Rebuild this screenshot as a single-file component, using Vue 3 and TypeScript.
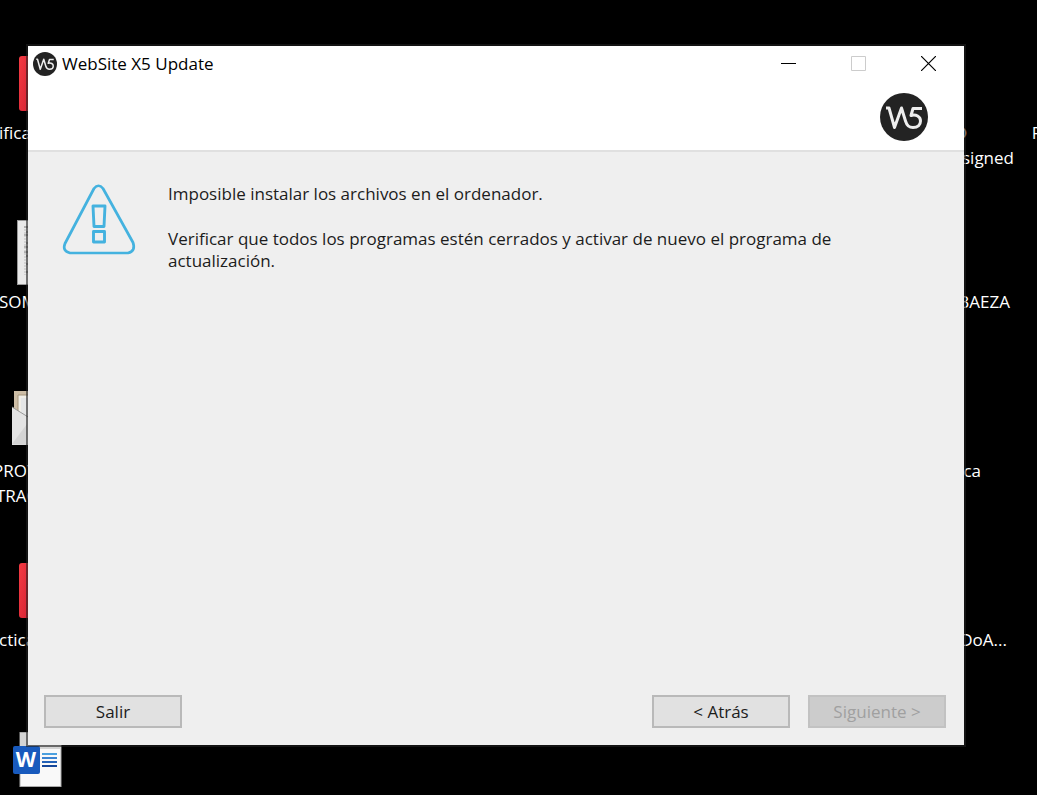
<script setup lang="ts">
interface DesktopLabel {
  text: string
  side: 'left' | 'right'
  offset: number
  top: number
}

const labels: DesktopLabel[] = [
  { text: 'ifica', side: 'left', offset: -1, top: 120 },
  { text: 'SOM', side: 'left', offset: -1, top: 289 },
  { text: 'PROY', side: 'left', offset: -7, top: 458 },
  { text: 'TRAC', side: 'left', offset: -4, top: 483 },
  { text: 'ctica', side: 'left', offset: -1, top: 627 },
  { text: 'D', side: 'right', offset: 70, top: 120 },
  { text: 'signed', side: 'right', offset: 23, top: 145 },
  { text: 'P', side: 'right', offset: -5, top: 120 },
  { text: 'BAEZA', side: 'right', offset: 27, top: 289 },
  { text: 'ca', side: 'right', offset: 56, top: 458 },
  { text: 'DoA...', side: 'right', offset: 30, top: 627 },
]

const placement = (l: DesktopLabel) => ({ top: `${l.top}px`, [l.side]: `${l.offset}px` })
</script>

<template>
  <div class="desktop">
    <div class="file pdf first"></div>
    <svg class="file sheet" width="26" height="66" viewBox="0 0 26 66" aria-hidden="true">
      <rect x=".5" y=".5" width="25" height="64" fill="#e9e9e9" stroke="#999" />
      <path d="M7 7h6M9 12h4M7 15h5M9 23h4M7 27h5M7 32h5M9 36h4M9 44h3M9 52h3" stroke="#777" />
      <path d="M8 9v46" stroke="#bbb" stroke-dasharray="2 1" />
    </svg>
    <svg class="file envelope" width="30" height="56" viewBox="0 0 30 56" aria-hidden="true">
      <path d="M3 1h27v54H3z" fill="#cdbda5" />
      <path d="M7 5h23v45H7z" fill="#f1eee7" stroke="#a6957c" />
      <path d="M10 8h20v40H10z" fill="#e5e6e6" />
      <path d="M1 17l29 18v20H1z" fill="#e4e4e4" />
      <path d="M1 17l29 18" stroke="#999" fill="none" />
      <path d="M1 54l15-20v21z" fill="#d4d4d4" />
    </svg>
    <div class="file pdf second"></div>
    <svg class="file word" width="50" height="56" viewBox="0 0 50 56" aria-hidden="true">
      <rect x="7" y=".5" width="41" height="54" fill="#f9f9f9" stroke="#aaa" />
      <path d="M7 1h40v16H7z" fill="#d4d4d4" />
      <path d="M29 22h15" stroke="#4ba0df" stroke-width="2" />
      <path d="M29 26h15" stroke="#3b83d1" stroke-width="2" />
      <path d="M29 30h15" stroke="#2362b8" stroke-width="2" />
      <path d="M29 34h15" stroke="#16479a" stroke-width="2" />
      <rect y="14" width="27" height="28" rx="2" fill="#185abd" />
      <text x="13" y="35" class="word-letter" text-anchor="middle">W</text>
    </svg>

    <span v-for="l in labels" :key="l.text" class="label" :style="placement(l)">{{ l.text }}</span>

    <main class="window">
      <header>
        <div class="titlebar">
          <svg class="mark" viewBox="0 0 48 48" aria-hidden="true">
            <circle cx="24" cy="24" r="24" fill="#232323" />
            <path d="M6.500 14.500h2.500L14.500 34.500 21.500 14.500 25.500 28C27 33 29 34.500 33 34.500C38 34.500 40.500 31.500 40.500 28C40.500 23.500 36 21 30.500 22.500L33 15H41.500" class="stroke" />
          </svg>
          <h1>WebSite X5 Update</h1>
          <div class="controls">
            <button type="button" aria-label="Minimizar">
              <svg width="15" height="15" viewBox="0 0 15 15"><path d="M0 7.500h15" stroke="#000" /></svg>
            </button>
            <button type="button" aria-label="Maximizar" disabled>
              <svg width="15" height="15" viewBox="0 0 15 15"><path d="M.5.5h14v14H.5z" fill="none" stroke="#ccc" /></svg>
            </button>
            <button type="button" aria-label="Cerrar">
              <svg width="15" height="15" viewBox="0 0 15 15"><path d="M0 0l15 15M15 0L0 15" stroke="#000" stroke-width="1.200" /></svg>
            </button>
          </div>
        </div>
        <div class="banner">
          <svg class="logo" viewBox="0 0 48 48" aria-hidden="true">
            <circle cx="24" cy="24" r="24" fill="#232323" />
            <path d="M6 15h3L14.500 34.500 21.500 15 25.500 28C27 33 29 34.500 33 34.500C38 34.500 40.500 31.500 40.500 28C40.500 23.500 36 21 31 22.500L33 15.500H42" class="stroke" />
          </svg>
        </div>
      </header>

      <section class="message">
        <svg width="74" height="72" viewBox="0 0 74 72" fill="none" stroke="#44b2df" aria-hidden="true">
          <path d="M32 4.500Q36.500-1 41 4.500L71 58.500Q74 67 66 69H8Q0 67 3 59.500Z" stroke-width="2.700" stroke-linejoin="round" />
          <path d="M31 22h12l-1 20.500h-10zM31.500 47.500h11v10.500h-11z" stroke-width="2.900" stroke-linejoin="round" />
        </svg>
        <div class="copy">
          <p>Imposible instalar los archivos en el ordenador.</p>
          <p>Verificar que todos los programas estén cerrados y activar de nuevo el programa de actualización.</p>
        </div>
      </section>

      <footer>
        <button type="button" class="action exit">Salir</button>
        <button type="button" class="action">&lt; Atrás</button>
        <button type="button" class="action" disabled>Siguiente &gt;</button>
      </footer>
    </main>
  </div>
</template>

<style>
body {
  background: #000;
}
</style>

<style scoped>
.desktop {
  position: relative;
  min-height: 100vh;
  overflow: hidden;
  background: #000;
  font-family: "Open Sans", "Noto Sans", sans-serif;
}
.file,
.label {
  position: absolute;
}
.pdf {
  left: 19px;
  width: 40px;
  height: 55px;
  border-radius: 3px;
  background: linear-gradient(100deg, #f43b43, #d92535 35%);
}
.first { top: 56px; }
.second { top: 563px; }
.sheet { left: 17px; top: 220px; }
.envelope { left: 11px; top: 390px; }
.word { left: 13px; top: 732px; }
.word-letter {
  font: bold 21px "Open Sans", sans-serif;
  fill: #fff;
}
.label {
  color: #fff;
  font-size: 17px;
  line-height: 25px;
  white-space: nowrap;
}
.window {
  position: absolute;
  inset: 46px 73px 50px 28px;
  display: flex;
  flex-direction: column;
  background: #efefef;
  box-shadow: 0 0 0 2px rgba(32, 32, 32, 0.6);
}
header {
  background: #fff;
  border-bottom: 2px solid #e0e0e0;
}
.titlebar {
  display: flex;
  align-items: center;
  height: 35px;
  padding-left: 5px;
}
.mark {
  width: 24px;
  height: 24px;
}
.stroke {
  fill: none;
  stroke: #eee;
  stroke-width: 3px;
  stroke-linejoin: round;
}
h1 {
  margin: 0 0 0 5px;
  color: #000;
  font-size: 17px;
  font-weight: 400;
  line-height: 35px;
}
.controls {
  display: flex;
  margin: 0 1px 0 auto;
}
.controls button {
  display: flex;
  align-items: center;
  justify-content: center;
  width: 70px;
  height: 35px;
  padding: 0;
  border: 0;
  background: none;
}
.banner {
  display: flex;
  justify-content: flex-end;
  padding: 12px 36px 9px;
}
.logo {
  width: 48px;
  height: 48px;
}
.message {
  display: flex;
  flex: 1;
  align-items: flex-start;
  gap: 32px;
  padding: 31px 110px 0 34px;
}
.message svg {
  flex: none;
  margin-top: 1px;
}
.copy {
  color: #1c1c1c;
  font-size: 17px;
  line-height: 22px;
}
.copy p {
  margin: 0 0 23px;
}
footer {
  display: flex;
  gap: 18px;
  padding: 0 18px 17px 16px;
}
.action {
  width: 138px;
  height: 33px;
  padding: 0;
  border: 2px solid #b9b9b9;
  background: #e1e1e1;
  color: #1c1c1c;
  font-family: inherit;
  font-size: 17px;
  line-height: 22px;
}
.action:disabled {
  border-color: #c2c2c2;
  background: #ccc;
  color: #a0a0a0;
}
.exit {
  margin-right: auto;
}
</style>
